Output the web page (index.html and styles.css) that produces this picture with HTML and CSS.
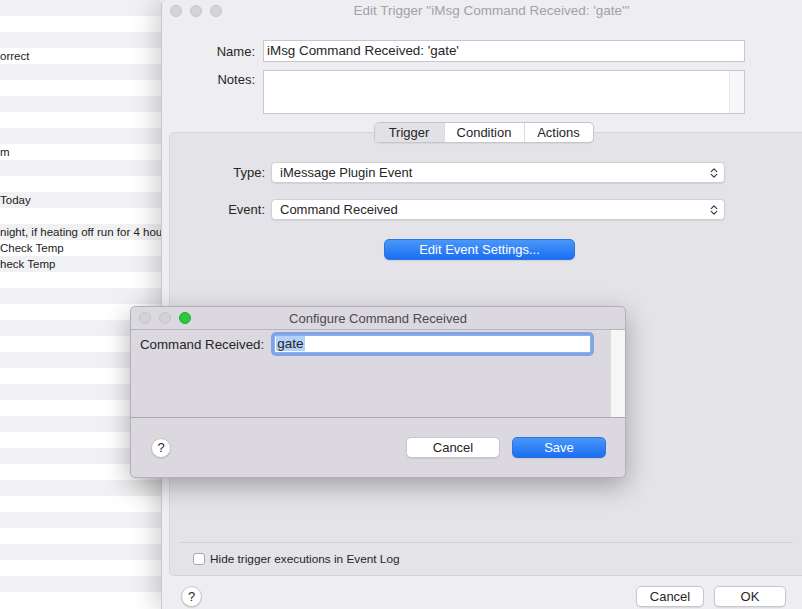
FILE: index.html
```html
<!DOCTYPE html>
<html>
<head>
<meta charset="utf-8">
<link rel="stylesheet" href="styles.css">
</head>
<body>
<div class="list">
  <div class="row"></div><div class="row"></div><div class="row"></div>
  <div class="row">orrect</div>
  <div class="row"></div><div class="row"></div><div class="row"></div><div class="row"></div><div class="row"></div>
  <div class="row">m</div>
  <div class="row"></div><div class="row"></div>
  <div class="row">Today</div>
  <div class="row"></div>
  <div class="row">night, if heating off run for 4 hou</div>
  <div class="row">Check Temp</div>
  <div class="row">heck Temp</div>
  <div class="row"></div><div class="row"></div><div class="row"></div><div class="row"></div><div class="row"></div>
  <div class="row"></div><div class="row"></div><div class="row"></div><div class="row"></div><div class="row"></div>
  <div class="row"></div><div class="row"></div><div class="row"></div><div class="row"></div><div class="row"></div>
  <div class="row"></div><div class="row"></div><div class="row"></div><div class="row"></div><div class="row"></div>
  <div class="row"></div>
</div>

<div class="window">
  <div class="titlebar">
    <div class="lights"><span class="light"></span><span class="light"></span><span class="light"></span></div>
    <div class="title">Edit Trigger "iMsg Command Received: 'gate'"</div>
    <div></div>
  </div>

  <div class="form">
    <div class="lbl">Name:</div>
    <div class="field">iMsg Command Received: 'gate'</div>
    <div class="lbl lbl-top">Notes:</div>
    <div class="textarea"><div class="ta-body"></div><div class="ta-scroll"></div></div>
  </div>

  <div class="tabs">
    <div class="seg">
      <span class="seg-item seg-active seg-w1">Trigger</span>
      <span class="seg-item seg-w2">Condition</span>
      <span class="seg-item seg-w1">Actions</span>
    </div>
  </div>

  <div class="tabbox">
    <div class="tgrid">
      <div class="lbl">Type:</div>
      <div class="popup"><span>iMessage Plugin Event</span>
        <svg class="chev" width="8" height="12" viewBox="0 0 8 12"><path d="M1.2 4.6 L4 1.8 L6.8 4.6 M1.2 7.4 L4 10.2 L6.8 7.4" fill="none" stroke="#3a3a3a" stroke-width="1.2" stroke-linecap="round" stroke-linejoin="round"/></svg>
      </div>
      <div class="lbl">Event:</div>
      <div class="popup"><span>Command Received</span>
        <svg class="chev" width="8" height="12" viewBox="0 0 8 12"><path d="M1.2 4.6 L4 1.8 L6.8 4.6 M1.2 7.4 L4 10.2 L6.8 7.4" fill="none" stroke="#3a3a3a" stroke-width="1.2" stroke-linecap="round" stroke-linejoin="round"/></svg>
      </div>
    </div>
    <div class="btn btn-blue btn-edit">Edit Event Settings...</div>
    <div class="tab-footer">
      <div class="sep"></div>
      <div class="check"><span class="box"></span><span>Hide trigger executions in Event Log</span></div>
    </div>
  </div>

  <div class="bottom">
    <span class="help">?</span>
    <div class="actions">
      <div class="btn btn-cancel">Cancel</div>
      <div class="btn btn-ok">OK</div>
    </div>
  </div>
</div>

<div class="dialog">
  <div class="dtitlebar">
    <div class="lights dlights"><span class="light"></span><span class="light"></span><span class="light light-green"></span></div>
    <div class="dtitle">Configure Command Received</div>
    <div></div>
  </div>
  <div class="dcontent">
    <div class="dmain">
      <div class="drow">
        <span class="dlbl">Command Received:</span>
        <div class="dinput"><span class="sel">gate</span></div>
      </div>
    </div>
    <div class="dscroll"></div>
  </div>
  <div class="dfooter">
    <span class="help dhelp">?</span>
    <div class="dactions">
      <div class="btn btn-dcancel">Cancel</div>
      <div class="btn btn-blue btn-save">Save</div>
    </div>
  </div>
</div>
</body>
</html>
```

FILE: styles.css
```css
* { box-sizing: border-box; }
html, body {
  margin: 0;
  padding: 0;
}
body {
  width: 802px;
  height: 609px;
  overflow: hidden;
  display: flex;
  background: #ffffff;
  font-family: "Liberation Sans", Arial, sans-serif;
  font-size: 13px;
  color: #262626;
  position: relative;
}

/* background list */
.list {
  flex: none;
  width: 161px;
  overflow: hidden;
  white-space: nowrap;
}
.row {
  height: 16px;
  line-height: 16px;
  font-size: 11.5px;
  color: #222;
}
.row:nth-child(odd) { background: #f1f1f3; }
.row:nth-child(even) { background: #ffffff; }

/* main window */
.window {
  flex: none;
  width: 650px;
  height: 609px;
  background: #eeedf1;
  border-left: 1px solid #c9c8cc;
  border-top-left-radius: 5px;
  box-shadow: -6px 0 24px rgba(0, 0, 0, 0.18);
  position: relative;
  z-index: 1;
  display: flex;
  flex-direction: column;
}
.titlebar {
  height: 21px;
  display: grid;
  grid-template-columns: 1fr auto 1fr;
  align-items: center;
}
.lights {
  display: flex;
  gap: 8px;
  padding-left: 8px;
}
.light {
  width: 12px;
  height: 12px;
  border-radius: 50%;
  background: #d3d2d6;
  border: 1px solid #c6c5c9;
}
.light-green {
  background: #2bc840;
  border-color: #22a836;
}
.title {
  color: #a3a2a6;
  font-size: 13.5px;
  padding-left: 10px;
}

.form {
  margin-top: 19px;
  padding-left: 7px;
  display: grid;
  grid-template-columns: 86px 482px;
  column-gap: 8px;
  row-gap: 8px;
}
.lbl {
  text-align: right;
  align-self: center;
  color: #262626;
}
.lbl-top {
  align-self: start;
  padding-top: 2px;
}
.field {
  height: 22px;
  background: #fff;
  border: 1px solid #c8c7cb;
  line-height: 20px;
  padding-left: 3px;
  font-size: 13.4px;
}
.textarea {
  height: 44px;
  background: #fff;
  border: 1px solid #c8c7cb;
  display: flex;
}
.ta-body { flex: 1; }
.ta-scroll {
  width: 15px;
  background: #f7f7f7;
  border-left: 1px solid #e6e6e6;
}

.tabs {
  margin-top: 8px;
  display: flex;
  justify-content: center;
  padding-left: 8px;
  position: relative;
  z-index: 2;
}
.seg {
  display: flex;
  height: 21px;
  background: #fff;
  border: 1px solid #c6c5c9;
  border-radius: 5px;
  box-shadow: 0 1px 1px rgba(0, 0, 0, 0.06);
  overflow: hidden;
  margin-left: -14px;
}
.seg-item {
  text-align: center;
  line-height: 19px;
  border-left: 1px solid #dcdbdf;
}
.seg-item:first-child { border-left: none; }
.seg-w1 { width: 69px; }
.seg-w2 { width: 80px; }
.seg-active { background: #e2e1e5; }

.tabbox {
  margin: -11px 2px 0 7px;
  height: 444px;
  background: #e4e3e8;
  border: 1px solid #d6d5da;
  border-radius: 5px;
  padding-top: 29px;
  padding-bottom: 9px;
  display: flex;
  flex-direction: column;
}
.tgrid {
  display: grid;
  grid-template-columns: 90px 454px;
  column-gap: 6px;
  row-gap: 16px;
  padding-left: 5px;
}
.popup {
  height: 21px;
  background: #fff;
  border: 1px solid #cfced2;
  border-radius: 4px;
  box-shadow: 0 1px 1px rgba(0, 0, 0, 0.08);
  display: flex;
  align-items: center;
  justify-content: space-between;
  padding: 0 6px 0 8px;
}
.chev { display: block; }

.btn {
  height: 21px;
  line-height: 19px;
  text-align: center;
  background: #fff;
  border: 1px solid #c7c6ca;
  border-radius: 5px;
  box-shadow: 0 1px 1px rgba(0, 0, 0, 0.08);
  color: #262626;
}
.btn-blue {
  background: linear-gradient(#4a97fa, #1b6ef1);
  border-color: #2b74e6;
  color: #fff;
}
.btn-edit {
  margin: 19px 0 0 214px;
  width: 191px;
}
.tab-footer {
  margin-top: auto;
}
.sep {
  height: 1px;
  background: #cfced3;
  margin: 0 15px 0 10px;
}
.check {
  margin-top: 9px;
  padding-left: 23px;
  display: flex;
  align-items: center;
  gap: 5px;
  font-size: 11.8px;
  height: 14px;
}
.box {
  width: 12px;
  height: 12px;
  background: #fff;
  border: 1px solid #a9a8ac;
  border-radius: 3px;
}

.bottom {
  margin-top: 10px;
  padding: 0 25px 0 19px;
  display: flex;
  align-items: center;
  justify-content: space-between;
}
.help {
  width: 21px;
  height: 21px;
  border-radius: 50%;
  background: #fff;
  border: 1px solid #c4c3c7;
  box-shadow: 0 1px 1px rgba(0, 0, 0, 0.12);
  text-align: center;
  line-height: 19px;
  font-size: 13px;
  color: #262626;
}
.actions {
  display: flex;
  gap: 10px;
}
.btn-cancel { width: 68px; }
.btn-ok { width: 72px; }

/* dialog */
.dialog {
  position: absolute;
  left: 130px;
  top: 306px;
  width: 496px;
  height: 172px;
  z-index: 5;
  background: #dbd8e0;
  border: 1px solid #b3b1b7;
  border-radius: 5px;
  box-shadow: 0 8px 26px rgba(0, 0, 0, 0.3);
  display: flex;
  flex-direction: column;
  overflow: hidden;
}
.dtitlebar {
  height: 23px;
  flex: none;
  display: grid;
  grid-template-columns: 1fr auto 1fr;
  align-items: center;
  border-bottom: 1px solid #b6b4ba;
}
.dlights { padding-left: 8px; }
.dtitle {
  color: #4b4a4e;
  font-size: 13px;
}
.dcontent {
  height: 88px;
  flex: none;
  display: flex;
  border-bottom: 1px solid #a9a8ac;
}
.dmain { flex: 1; }
.drow {
  display: flex;
  align-items: center;
  padding: 5px 0 0 9px;
}
.dlbl {
  font-size: 13.3px;
}
.dinput {
  margin-left: 10px;
  width: 317px;
  height: 18px;
  background: #fff;
  border: 1px solid #8fb0e8;
  border-radius: 2px;
  box-shadow: 0 0 0 3px #7fa5e9;
  padding-left: 1px;
  line-height: 16px;
}
.sel {
  background: #b3d2fa;
  padding: 0 2px 0 1px;
  font-size: 13.5px;
}
.dscroll {
  width: 14px;
  background: #f6f6f7;
}
.dfooter {
  flex: 1;
  display: flex;
  align-items: center;
  justify-content: space-between;
  padding: 0 19px 0 20px;
}
.dhelp {
  width: 20px;
  height: 20px;
  line-height: 18px;
}
.dactions {
  display: flex;
  gap: 12px;
}
.btn-dcancel { width: 94px; }
.btn-save { width: 94px; }
```
